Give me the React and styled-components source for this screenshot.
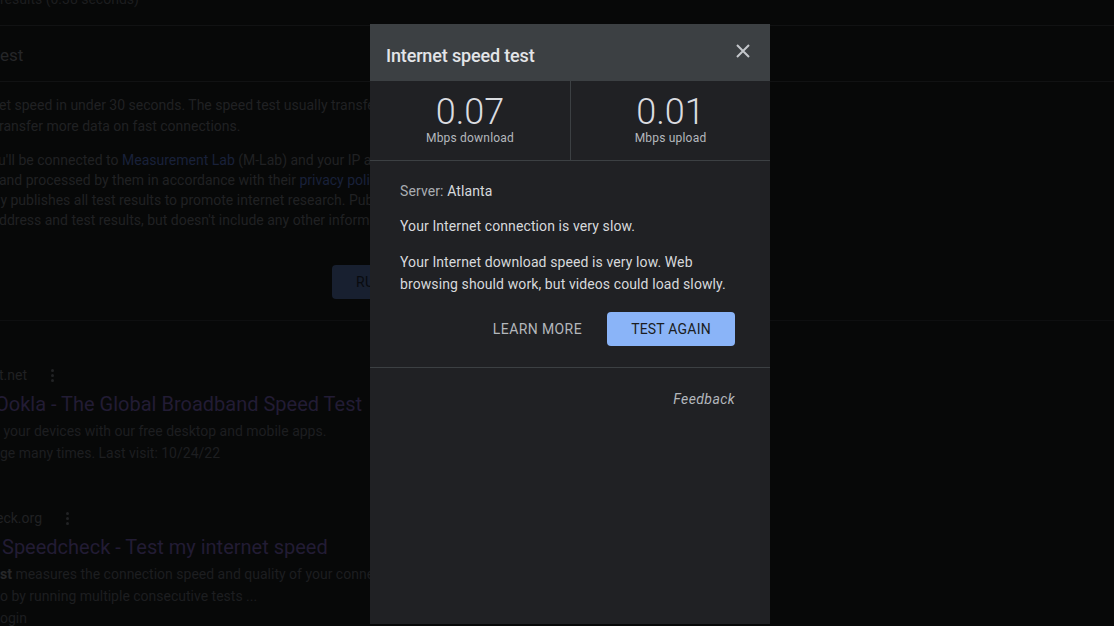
import React from 'react';
import styled, { createGlobalStyle } from 'styled-components';

const GlobalStyle = createGlobalStyle`
  html, body {
    margin: 0;
    padding: 0;
    background-color: #070808;
    overflow: hidden;
  }
  body {
    font-family: Roboto, "Liberation Sans", Arial, sans-serif;
    width: 1114px;
    height: 626px;
  }
`;

/* ---------- dimmed results page behind the dialog ---------- */

const Page = styled.div`
  display: flex;
  flex-direction: column;
  width: 1114px;
  height: 626px;
  overflow: hidden;
  color: #1f2022;
  & > * {
    flex-shrink: 0;
  }
`;

const StatsRow = styled.div`
  height: 34px;
  margin-top: -8px;
  box-sizing: border-box;
  border-bottom: 1px solid #111213;
  font-size: 14px;
  line-height: 14px;
  color: #1c1d1f;
`;

const WidgetTitle = styled.div`
  height: 56px;
  display: flex;
  align-items: center;
  padding-top: 3px;
  box-sizing: border-box;
  font-size: 17px;
  color: #252628;
  border-bottom: 1px solid #111213;
`;

const Para = styled.div`
  margin-top: ${(p) => p.top}px;
  font-size: 14px;
  line-height: ${(p) => p.lh}px;
  white-space: nowrap;
  color: #202123;
`;

const Line = styled.div`
  margin-left: ${(p) => p.shift || 0}px;
`;

const DimLink = styled.span`
  color: #19213a;
`;

const RunRow = styled.div`
  margin-top: 35px;
  padding-left: 332px;
  height: 34px;
  display: flex;
`;

const RunButton = styled.div`
  width: 200px;
  height: 34px;
  background: #182030;
  border-radius: 4px;
  display: flex;
  align-items: center;
  padding-left: 24px;
  box-sizing: border-box;
  font-size: 14px;
  color: #090b0f;
  letter-spacing: 0.3px;
`;

const Divider = styled.div`
  margin-top: 21px;
  height: 1px;
  background: #0e0f10;
`;

const Result = styled.div`
  margin-top: ${(p) => p.top}px;
  display: flex;
  flex-direction: column;
  white-space: nowrap;
`;

const Site = styled.div`
  display: flex;
  align-items: center;
  gap: ${(p) => p.gap}px;
  margin-left: ${(p) => p.shift}px;
  font-size: 14px;
  line-height: 20px;
  color: #202123;
`;

const Dots = styled.span`
  display: flex;
  flex-direction: column;
  gap: 2px;
  & > i {
    width: 3px;
    height: 3px;
    border-radius: 50%;
    background: #222325;
  }
`;

const ResultTitle = styled.div`
  margin-top: 6px;
  margin-left: ${(p) => p.shift}px;
  font-size: 20px;
  line-height: 26px;
  color: #221c34;
`;

const Snippet = styled.div`
  margin-top: 3px;
  font-size: 14px;
  line-height: 22px;
  color: #1d1e20;
  & + & {
    margin-top: 0;
  }
`;

const Strong = styled.b`
  color: #27282a;
`;

/* ---------- dialog ---------- */

const Dialog = styled.div`
  position: absolute;
  left: 370px;
  top: 24px;
  width: 400px;
  height: 600px;
  background: #202124;
  display: flex;
  flex-direction: column;
`;

const Header = styled.div`
  height: 57px;
  flex-shrink: 0;
  background: #3c4043;
  display: flex;
  align-items: center;
  justify-content: space-between;
  padding: 5px 19px 0 16px;
  box-sizing: border-box;
`;

const Title = styled.h2`
  margin: 0;
  font-size: 18px;
  font-weight: 500;
  color: #e3e5e8;
  letter-spacing: -0.15px;
`;

const Close = styled.button`
  background: transparent;
  border: none;
  padding: 0;
  margin-top: -8px;
  width: 16px;
  height: 16px;
  display: flex;
  align-items: center;
  justify-content: center;
  cursor: pointer;
`;

const Stats = styled.div`
  display: grid;
  grid-template-columns: 1fr 1fr;
  height: 79px;
  flex-shrink: 0;
  border-bottom: 1px solid #3c4043;
`;

const Stat = styled.div`
  display: flex;
  flex-direction: column;
  align-items: center;
  padding-top: 13px;
  box-sizing: border-box;
  border-left: ${(p) => (p.divided ? '1px solid #3c4043' : 'none')};
`;

const Value = styled.div`
  font-size: 36px;
  line-height: 37px;
  color: #dadce0;
  font-weight: 300;
`;

const Unit = styled.div`
  font-size: 12px;
  line-height: 14px;
  color: #b4b8bd;
  letter-spacing: 0.2px;
`;

const Body = styled.div`
  padding: 20px 35px 21px 30px;
  border-bottom: 1px solid #3c4043;
  display: flex;
  flex-direction: column;
`;

const Text = styled.p`
  margin: ${(p) => p.top || 0}px 0 0;
  font-size: 14px;
  line-height: ${(p) => p.lh || 20}px;
  color: #d7d9dc;
  letter-spacing: 0.1px;
`;

const Muted = styled.span`
  color: #a9adb2;
`;

const Actions = styled.div`
  margin-top: 17px;
  display: flex;
  justify-content: flex-end;
  align-items: center;
  gap: 13px;
`;

const TextButton = styled.button`
  background: transparent;
  border: none;
  font-family: inherit;
  font-size: 14px;
  color: #b3b7bc;
  padding: 0 12px;
  height: 34px;
  letter-spacing: 0.4px;
`;

const PrimaryButton = styled.button`
  background: #8ab4f8;
  border: none;
  border-radius: 4px;
  font-family: inherit;
  font-size: 14px;
  color: #1b1d21;
  width: 128px;
  height: 34px;
  letter-spacing: 0.2px;
`;

const Footer = styled.div`
  display: flex;
  justify-content: flex-end;
  padding: 21px 35px 0 30px;
`;

const Feedback = styled.a`
  font-size: 14px;
  line-height: 20px;
  font-style: italic;
  color: #b3b7bc;
  letter-spacing: 0.4px;
`;

const CloseIcon = () => (
  <svg width="14" height="14" viewBox="0 0 14 14">
    <path d="M1 1 L13 13 M13 1 L1 13" stroke="#c4c7cb" strokeWidth="2" />
  </svg>
);

const App = () => (
  <>
    <GlobalStyle />
    <Page>
      <StatsRow>results (0.38 seconds)</StatsRow>
      <WidgetTitle>est</WidgetTitle>
      <Para top={13} lh={21}>
        <Line shift={-1}>et speed in under 30 seconds. The speed test usually transfers less than 40 MB of data,</Line>
        <Line shift={-1}>ransfer more data on fast connections.</Line>
      </Para>
      <Para top={13} lh={20}>
        <Line shift={-2}>
          u'll be connected to <DimLink>Measurement Lab</DimLink> (M-Lab) and your IP address will be shared
        </Line>
        <Line shift={-1}>
          and processed by them in accordance with their <DimLink>privacy policy</DimLink>.
        </Line>
        <Line shift={-3}>ly publishes all test results to promote internet research. Published information</Line>
        <Line shift={-1}>ddress and test results, but doesn't include any other information about you.</Line>
      </Para>
      <RunRow>
        <RunButton>RUN SPEED TEST</RunButton>
      </RunRow>
      <Divider />

      <Result top={44}>
        <Site shift={-1} gap={24}>
          t.net
          <Dots><i /><i /><i /></Dots>
        </Site>
        <ResultTitle shift={-5}>Ookla - The Global Broadband Speed Test</ResultTitle>
        <Snippet>&nbsp;your devices with our free desktop and mobile apps.</Snippet>
        <Snippet>ge many times. Last visit: 10/24/22</Snippet>
      </Result>

      <Result top={44}>
        <Site shift={-4} gap={24}>
          eck.org
          <Dots><i /><i /><i /></Dots>
        </Site>
        <ResultTitle shift={2}>Speedcheck - Test my internet speed</ResultTitle>
        <Snippet>
          <Strong>st</Strong> measures the connection speed and quality of your connection
        </Snippet>
        <Snippet>o by running multiple consecutive tests ...</Snippet>
        <Snippet>ogin</Snippet>
      </Result>
    </Page>

    <Dialog>
      <Header>
        <Title>Internet speed test</Title>
        <Close aria-label="Close">
          <CloseIcon />
        </Close>
      </Header>
      <Stats>
        <Stat>
          <Value>0.07</Value>
          <Unit>Mbps download</Unit>
        </Stat>
        <Stat divided>
          <Value>0.01</Value>
          <Unit>Mbps upload</Unit>
        </Stat>
      </Stats>
      <Body>
        <Text>
          <Muted>Server:</Muted> Atlanta
        </Text>
        <Text top={14} lh={22}>Your Internet connection is very slow.</Text>
        <Text top={14} lh={22}>
          Your Internet download speed is very low. Web browsing should work, but videos could load slowly.
        </Text>
        <Actions>
          <TextButton>LEARN MORE</TextButton>
          <PrimaryButton>TEST AGAIN</PrimaryButton>
        </Actions>
      </Body>
      <Footer>
        <Feedback>Feedback</Feedback>
      </Footer>
    </Dialog>
  </>
);

export default App;
